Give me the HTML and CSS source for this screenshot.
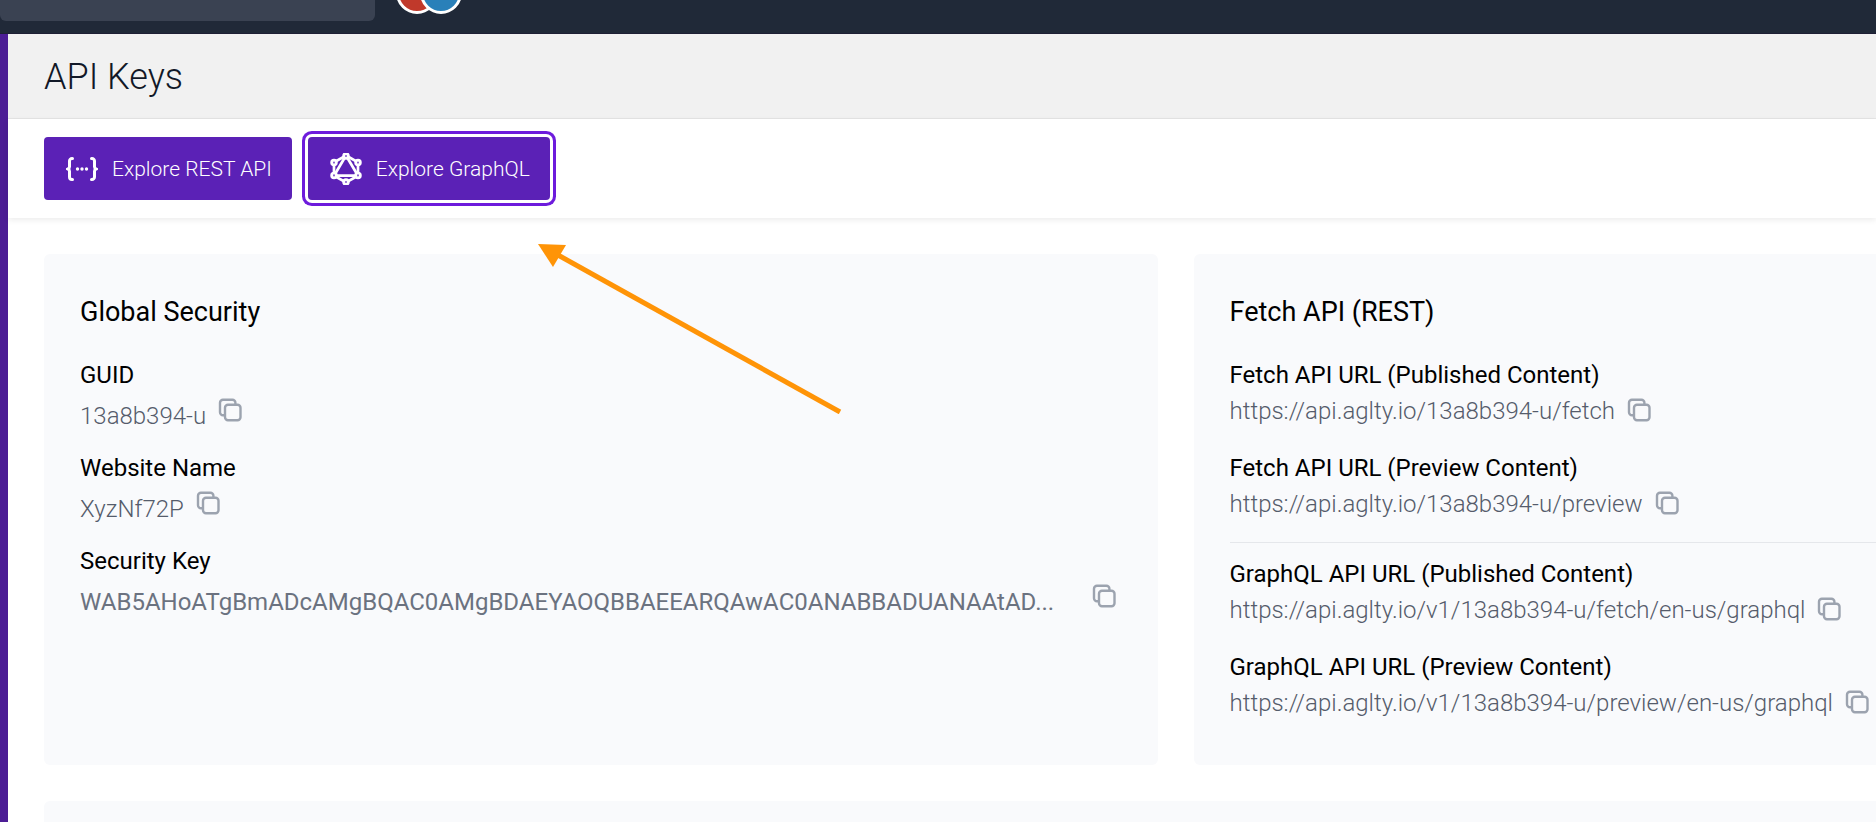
FILE: index.html
```
<!DOCTYPE html>
<html lang="en">
<head>
  <meta charset="UTF-8" />
  <meta name="viewport" content="width=device-width, initial-scale=1.0" />
  <title>API Keys</title>
  <link rel="stylesheet" href="styles.css">
</head>
<body>
  <svg class="sprite" aria-hidden="true">
    <symbol id="icon-copy" viewBox="0 0 24 24">
      <path d="M6.500 17.200H5a3 3 0 0 1-3-3V4.800a3 3 0 0 1 3-3h9.400a3 3 0 0 1 3 3V6.500" />
      <rect x="7" y="6.800" width="15.500" height="15.500" rx="3" />
    </symbol>
  </svg>

  <header class="topbar">
    <input class="search" type="search" aria-label="Search">
    <div class="avatars">
      <span class="avatar red"></span>
      <span class="avatar blue"></span>
    </div>
  </header>

  <div class="layout">
    <aside class="rail"></aside>

    <main class="main">
      <div class="page-header">
        <h1>API Keys</h1>
      </div>

      <div class="toolbar">
        <button class="btn" type="button">
          <svg class="btn-icon" viewBox="0 0 32 32" fill="none" stroke="currentColor" stroke-width="3" stroke-linecap="round">
            <path d="M6.500 5.500H6a2.500 2.500 0 0 0-2.500 2.500v5.500a2.500 2.500 0 0 1-1.500 2.500 2.500 2.500 0 0 1 1.500 2.500V24A2.500 2.500 0 0 0 6 26.500h.5" />
            <path d="M25.500 5.500h.5a2.500 2.500 0 0 1 2.500 2.500v5.500a2.500 2.500 0 0 0 1.500 2.500 2.500 2.500 0 0 0-1.500 2.500V24a2.500 2.500 0 0 1-2.500 2.500h-.5" />
            <g fill="currentColor" stroke="none">
              <circle cx="11.500" cy="16" r="1.700" />
              <circle cx="16" cy="16" r="1.700" />
              <circle cx="20.500" cy="16" r="1.700" />
            </g>
          </svg>
          Explore REST API
        </button>
        <button class="btn focused" type="button">
          <svg class="btn-icon" viewBox="0 0 32 32" fill="none" stroke="currentColor" stroke-width="2.700">
            <path d="M16 2.500 28 9.300v13.400L16 29.500 4 22.700V9.300z" />
            <path d="M16 2.500 28 22.700H4z" />
            <g fill="#8a5fd0">
              <circle cx="16" cy="3" r="2.400" />
              <circle cx="28" cy="9.600" r="2.400" />
              <circle cx="28" cy="22.400" r="2.400" />
              <circle cx="16" cy="29" r="2.400" />
              <circle cx="4" cy="22.400" r="2.400" />
              <circle cx="4" cy="9.600" r="2.400" />
            </g>
          </svg>
          Explore GraphQL
        </button>
      </div>

      <div class="cards">
        <section class="card security">
          <h2>Global Security</h2>
          <div class="field">
            <h3>GUID</h3>
            <div class="value">
              <span>13a8b394-u</span>
              <button class="copy" type="button" aria-label="Copy GUID"><svg><use href="#icon-copy" /></svg></button>
            </div>
          </div>
          <div class="field">
            <h3>Website Name</h3>
            <div class="value">
              <span>XyzNf72P</span>
              <button class="copy" type="button" aria-label="Copy website name"><svg><use href="#icon-copy" /></svg></button>
            </div>
          </div>
          <div class="field">
            <h3>Security Key</h3>
            <div class="value long">
              <span>WAB5AHoATgBmADcAMgBQAC0AMgBDAEYAOQBBAEEARQAwAC0ANABBADUANAAtAD...</span>
              <button class="copy" type="button" aria-label="Copy security key"><svg><use href="#icon-copy" /></svg></button>
            </div>
          </div>
        </section>

        <section class="card fetch">
          <h2>Fetch API (REST)</h2>
          <div class="field">
            <h3>Fetch API URL (Published Content)</h3>
            <div class="value">
              <span>https://api.aglty.io/13a8b394-u/fetch</span>
              <button class="copy" type="button" aria-label="Copy published fetch URL"><svg><use href="#icon-copy" /></svg></button>
            </div>
          </div>
          <div class="field">
            <h3>Fetch API URL (Preview Content)</h3>
            <div class="value">
              <span>https://api.aglty.io/13a8b394-u/preview</span>
              <button class="copy" type="button" aria-label="Copy preview fetch URL"><svg><use href="#icon-copy" /></svg></button>
            </div>
          </div>
          <hr>
          <div class="field">
            <h3>GraphQL API URL (Published Content)</h3>
            <div class="value">
              <span>https://api.aglty.io/v1/13a8b394-u/fetch/en-us/graphql</span>
              <button class="copy" type="button" aria-label="Copy published GraphQL URL"><svg><use href="#icon-copy" /></svg></button>
            </div>
          </div>
          <div class="field">
            <h3>GraphQL API URL (Preview Content)</h3>
            <div class="value">
              <span>https://api.aglty.io/v1/13a8b394-u/preview/en-us/graphql</span>
              <button class="copy" type="button" aria-label="Copy preview GraphQL URL"><svg><use href="#icon-copy" /></svg></button>
            </div>
          </div>
        </section>

        <section class="card next"></section>
      </div>

      <!-- callout arrow pointing at the GraphQL button -->
      <svg class="arrow" viewBox="0 0 304 170" aria-hidden="true">
        <path d="M20 11 302 168" fill="none" stroke="#ff9407" stroke-width="5" />
        <path d="M0 0 28 1 15 23z" fill="#ff9407" />
      </svg>
    </main>
  </div>
</body>
</html>
```
FILE: styles.css
```
* {
  box-sizing: border-box;
}

body {
  margin: 0;
  min-height: 100vh;
  display: flex;
  flex-direction: column;
  font-family: Roboto, "Liberation Sans", sans-serif;
  font-size: 24px;
  color: #000;
  background: #fff;
}

h1, h2, h3 {
  margin: 0;
  font-weight: 400;
}

button {
  font: inherit;
  border: none;
  cursor: pointer;
}

.sprite {
  display: none;
}

/* top bar */
.topbar {
  flex: none;
  height: 34px;
  display: flex;
  align-items: flex-end;
  gap: 21px;
  overflow: hidden;
  background: #202938;
  border-bottom: 1px solid #1e1f35;
}

.search {
  width: 20%;
  height: 48px;
  margin: 0 0 12px;
  border: none;
  border-radius: 6px;
  background: #3a4252;
}

.avatars {
  display: flex;
  margin-bottom: 19px;
}

.avatar {
  width: 42px;
  height: 42px;
  border: 3px solid #fff;
  border-radius: 50%;
}

.avatar + .avatar {
  margin-left: -18px;
}

.red {
  background: #c0392b;
}

.blue {
  background: #2980b9;
}

/* layout */
.layout {
  flex: 1;
  display: flex;
}

.rail {
  flex: none;
  width: 8px;
  background: #4c1d95;
}

.main {
  position: relative;
  flex: 1;
  min-width: 0;
  display: flex;
  flex-direction: column;
}

.page-header {
  padding: 19px 36px 17px;
  background: #f1f1f1;
  border-bottom: 1px solid #e5e5e5;
}

.page-header h1 {
  font-size: 36px;
  font-weight: 350;
  line-height: 48px;
  color: #111827;
}

.toolbar {
  display: flex;
  gap: 16px;
  padding: 18px 36px;
  box-shadow: 0 2px 6px rgba(0, 0, 0, 0.08);
}

.btn {
  display: flex;
  align-items: center;
  gap: 14px;
  height: 63px;
  padding: 0 20px 0 22px;
  border-radius: 4px;
  font-size: 21px;
  font-weight: 350;
  color: #fff;
  background: #5b21b6;
}

.btn-icon {
  width: 32px;
  height: 32px;
}

.btn.focused {
  box-shadow: 0 0 0 3px #fff, 0 0 0 6px #6d1bdc;
}

/* cards */
.cards {
  flex: 1;
  display: grid;
  grid-template-columns: minmax(0, 62fr) minmax(0, 38fr);
  grid-template-rows: auto 1fr;
  gap: 36px;
  padding: 36px 0 0 36px;
}

.card {
  padding: 38px 36px 44px;
  border-radius: 6px;
  background: #f9fafc;
}

.card h2 {
  margin-bottom: 25px;
  font-size: 27px;
  line-height: 40px;
}

.card h3 {
  font-size: 24px;
  line-height: 36px;
}

.card.fetch {
  padding-right: 0;
  border-radius: 6px 0 0 6px;
}

.card.next {
  grid-column: 1 / -1;
  padding: 0;
  border-radius: 6px 0 0 0;
}

.field + .field {
  margin-top: 21px;
}

.value {
  display: flex;
  gap: 12px;
  height: 36px;
  font-weight: 300;
  line-height: 36px;
  white-space: nowrap;
  color: #555c6b;
}

.security .value span {
  padding-top: 5px;
}

.value.long {
  justify-content: space-between;
  padding-right: 6px;
  font-weight: 400;
  color: #6b7280;
}

.copy {
  flex: none;
  height: 24px;
  margin-top: 5px;
  padding: 0;
  color: #9ca3af;
  background: none;
}

.copy svg {
  display: block;
  width: 24px;
  height: 24px;
  fill: none;
  stroke: currentColor;
  stroke-width: 2.4;
}

hr {
  margin: 20px 0 13px;
  border: none;
  border-top: 1px solid #e5e7eb;
}

.arrow {
  position: absolute;
  top: 210px;
  left: 530px;
  width: 304px;
  height: 170px;
}
```
